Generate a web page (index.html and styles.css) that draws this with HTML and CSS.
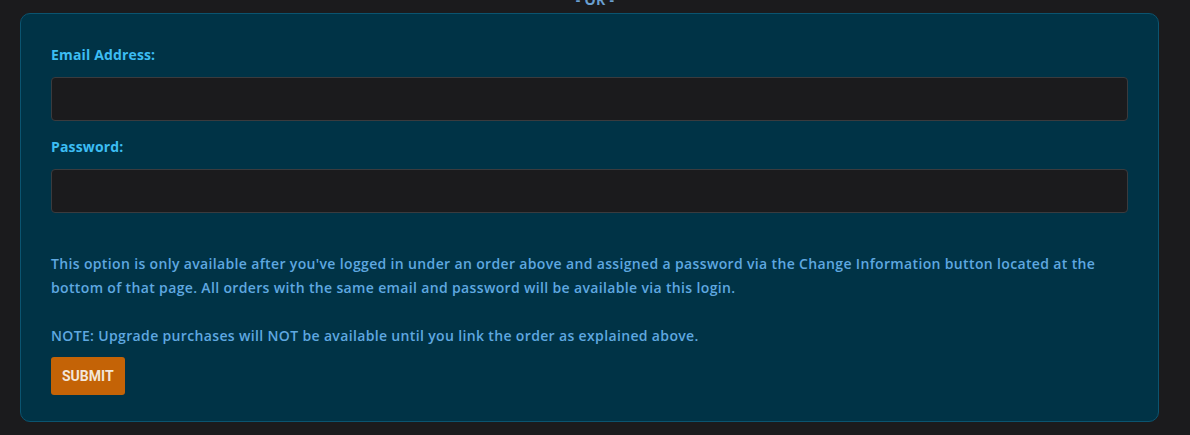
FILE: index.html
```html
<!DOCTYPE html>
<html lang="en">
<head>
    <meta charset="UTF-8">
    <meta name="viewport" content="width=device-width, initial-scale=1.0">
    <title>Order Login</title>
    <link rel="stylesheet" href="styles.css">
</head>
<body>
    <div class="divider">- OR -</div>
    <div class="login-card">
        <form class="login-form">
            <label for="email">Email Address:</label>
            <input type="email" id="email" name="email">

            <label for="password">Password:</label>
            <input type="password" id="password" name="password">

            <p class="info">This option is only available after you've logged in under an order above and assigned a password via the Change Information button located at the bottom of that page. All orders with the same email and password will be available via this login.</p>
            <p class="info note">NOTE: Upgrade purchases will NOT be available until you link the order as explained above.</p>

            <div class="actions">
                <button type="submit">SUBMIT</button>
            </div>
        </form>
    </div>
</body>
</html>
```

FILE: styles.css
```css
body {
    font-family: 'Open Sans', 'Noto Sans', sans-serif;
    margin: 0;
    padding: 0 31px 0 20px;
    background: #1b1b1d;
    color: #5fa8e0;
    height: 435px;
    overflow: hidden;
}

.divider {
    text-align: center;
    font-size: 14px;
    font-weight: 700;
    color: #6a9fd0;
    height: 13px;
    line-height: 0;
    margin-left: 11px;
    letter-spacing: 0.3px;
}

.login-card {
    background: #003346;
    border: 1px solid #0b5470;
    border-radius: 10px;
    padding: 30px 30px 26px 30px;
}

.login-form {
    display: flex;
    flex-direction: column;
}

label {
    font-size: 14px;
    font-weight: 700;
    color: #3cbdf3;
    letter-spacing: 0.15px;
    line-height: 22px;
    margin-bottom: 11px;
}

input {
    box-sizing: border-box;
    height: 44px;
    background: #1b1b1d;
    border: 1px solid #3a3b3e;
    border-radius: 4px;
    color: #ddd;
    padding: 0 12px;
    font-size: 14px;
    margin-bottom: 15px;
}

input:focus {
    outline: none;
    border-color: #3cbdf3;
}

.info {
    font-size: 14px;
    font-weight: 600;
    letter-spacing: 0.35px;
    line-height: 24px;
    margin: 24px 0 10px 0;
}

.note {
    margin: 14px 0 9px 0;
}

button {
    font-family: 'Roboto', sans-serif;
    background: #c46306;
    color: #f3e6da;
    border: none;
    border-radius: 3px;
    font-size: 14px;
    font-weight: 700;
    height: 38px;
    padding: 0 11px;
    cursor: pointer;
}

button:hover {
    background: #d87210;
}
```
